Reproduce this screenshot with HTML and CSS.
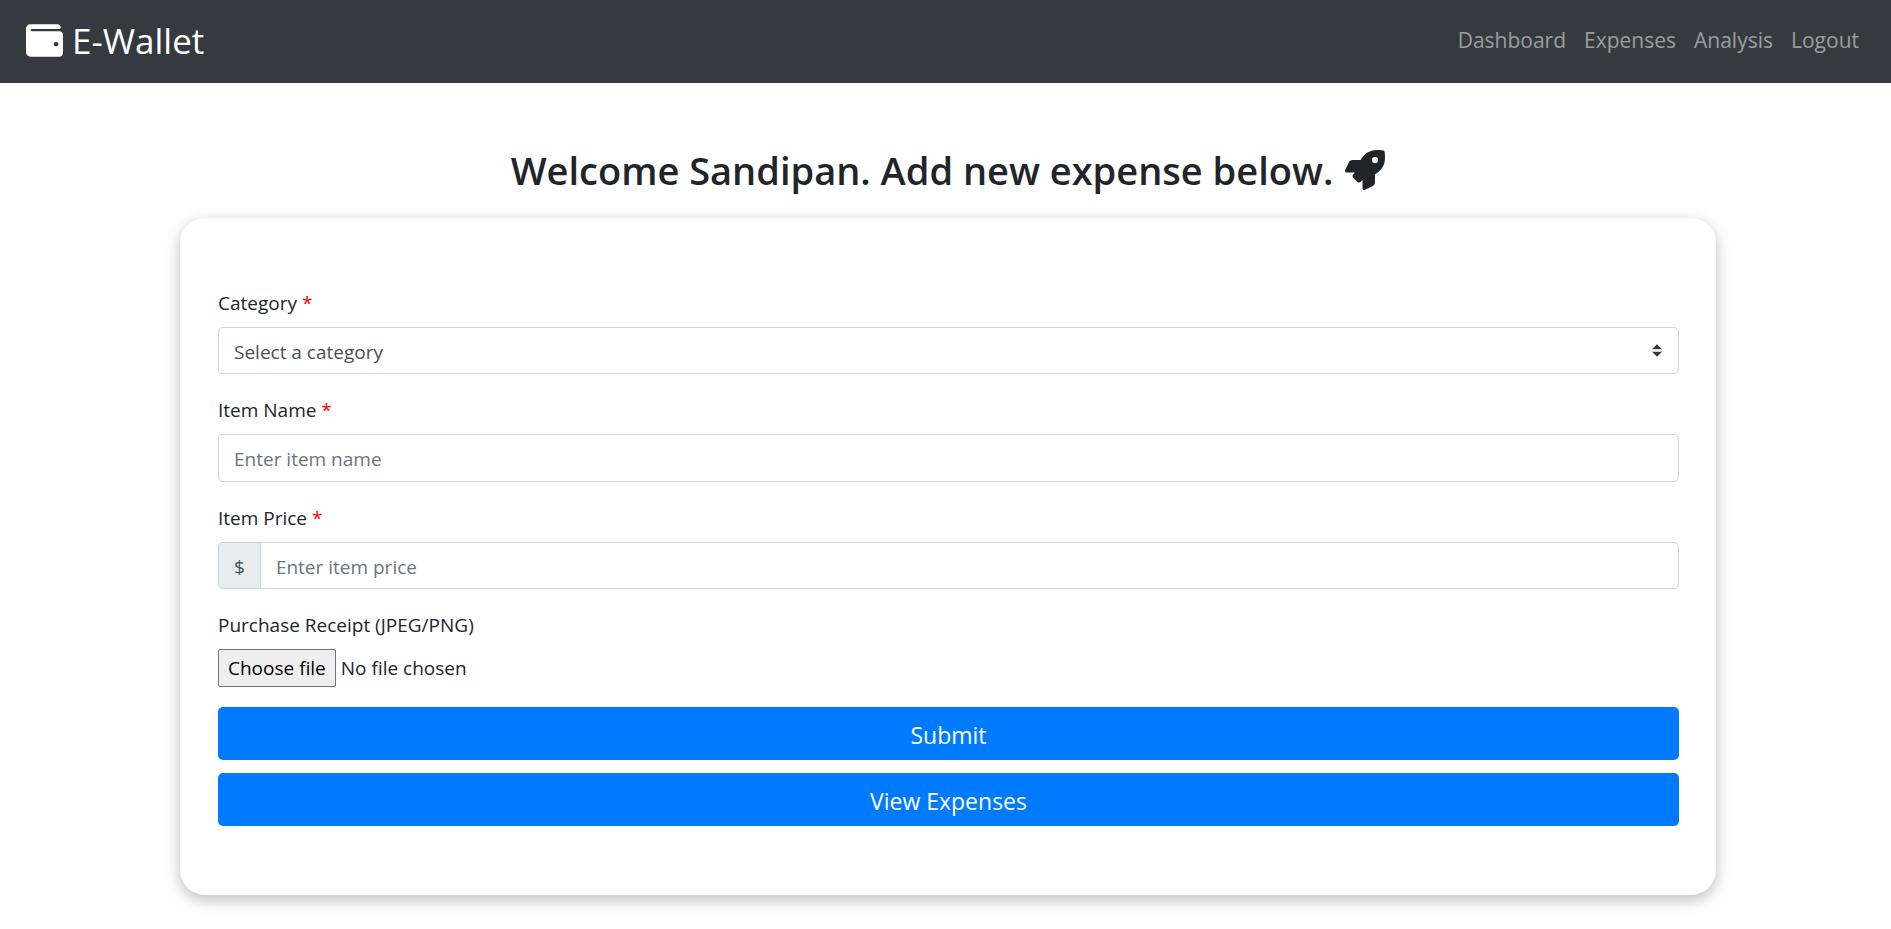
FILE: index.html
```html
<!DOCTYPE html>
<html lang="en">
<head>
<meta charset="utf-8">
<meta name="viewport" content="width=device-width, initial-scale=1">
<title>E-Wallet</title>
<link rel="stylesheet" href="styles.css">
</head>
<body>
<header class="navbar">
  <a class="brand" href="#">
    <svg class="brand-icon" viewBox="0 0 512 512" aria-hidden="true"><path fill="currentColor" d="M461.2 128H80c-8.84 0-16-7.16-16-16s7.16-16 16-16h384c8.84 0 16-7.16 16-16 0-26.51-21.49-48-48-48H64C28.65 32 0 60.65 0 96v320c0 35.35 28.65 64 64 64h397.2c28.02 0 50.8-21.53 50.8-48V176c0-26.47-22.78-48-50.8-48zM416 336c-17.67 0-32-14.33-32-32s14.33-32 32-32 32 14.33 32 32-14.33 32-32 32z"/></svg>
    <span>E-Wallet</span>
  </a>
  <nav class="nav-links">
    <a href="#">Dashboard</a>
    <a href="#">Expenses</a>
    <a href="#">Analysis</a>
    <a href="#">Logout</a>
  </nav>
</header>
<main class="page">
  <h1 class="title">
    <span>Welcome Sandipan. Add new expense below.</span>
    <svg class="title-icon" viewBox="0 0 512 512" aria-hidden="true"><path fill="currentColor" d="M505.12 19.09c-1.19-5.53-6.66-11-12.21-12.18C460.72 0 435.51 0 410.41 0 307.18 0 245.27 55.2 199.05 128H94.84c-16.35.02-35.56 11.88-42.89 26.48L2.52 253.3A28.4 28.4 0 0 0 0 264a24 24 0 0 0 24 24h103.82l-22.48 22.47c-11.36 11.36-13 32.26 0 45.25l50.9 50.9c11.16 11.19 32.16 13.16 45.28 0L224 384.16V488a24 24 0 0 0 24 24 28.56 28.56 0 0 0 10.71-2.52l98.73-49.39c14.63-7.29 26.5-26.5 26.5-42.86V312.8c72.6-46.31 128.04-108.4 128.04-211.1.1-25.2.1-50.4-6.86-82.61zM384.04 168a40 40 0 1 1 40-40 40 40 0 0 1-40 40z"/></svg>
  </h1>
  <form class="card">
    <div class="field">
      <label for="category">Category <span class="required">*</span></label>
      <div class="select-wrap">
        <select class="control" id="category">
          <option>Select a category</option>
        </select>
        <svg class="select-arrows" viewBox="0 0 4 5" aria-hidden="true"><path fill="#343a40" d="M2 0L0 2h4zm0 5L0 3h4z"/></svg>
      </div>
    </div>
    <div class="field">
      <label for="item-name">Item Name <span class="required">*</span></label>
      <input class="control control-text" id="item-name" type="text" placeholder="Enter item name">
    </div>
    <div class="field">
      <label for="item-price">Item Price <span class="required">*</span></label>
      <div class="input-group">
        <span class="prefix">$</span>
        <input class="control" id="item-price" type="text" placeholder="Enter item price">
      </div>
    </div>
    <div class="field">
      <label for="receipt">Purchase Receipt (JPEG/PNG)</label>
      <div class="file">
        <span class="file-button">Choose file</span>
        <span>No file chosen</span>
        <input class="file-input" id="receipt" type="file" accept="image/jpeg,image/png">
      </div>
    </div>
    <div class="actions">
      <button class="button" type="submit">Submit</button>
      <button class="button" type="button">View Expenses</button>
    </div>
  </form>
</main>
</body>
</html>
```

FILE: styles.css
```css
* {
  box-sizing: border-box;
}

body {
  margin: 0;
  background: #fff;
  color: #212529;
  font-family: "Segoe UI", "Open Sans", "Noto Sans", sans-serif;
  font-size: 19px;
  line-height: 30px;
}

input,
select,
button {
  margin: 0;
  font: inherit;
}

.navbar {
  display: flex;
  align-items: center;
  justify-content: space-between;
  padding: 13px 32px 15px 26px;
  background: #343a40;
}

.brand {
  display: flex;
  align-items: center;
  gap: 9px;
  color: #fff;
  font-size: 35px;
  line-height: 55px;
  text-decoration: none;
}

.brand-icon {
  width: 37px;
  height: 37px;
}

.nav-links {
  display: flex;
  gap: 18px;
  padding-bottom: 2px;
  font-size: 21px;
}

.nav-links a {
  color: rgba(255, 255, 255, 0.5);
  text-decoration: none;
}

.page {
  padding: 63px 175px 34px 180px;
}

.title {
  display: flex;
  align-items: center;
  justify-content: center;
  gap: 12px;
  margin: 0 0 24px;
  font-size: 38px;
  font-weight: 600;
  line-height: 48px;
}

.title-icon {
  width: 40px;
  height: 40px;
}

.card {
  padding: 69px 37px 69px 38px;
  border-radius: 25px;
  background: #fff;
  box-shadow: 0 5px 15px rgba(0, 0, 0, 0.26);
}

.field {
  display: flex;
  flex-direction: column;
  gap: 8px;
  margin-bottom: 20px;
}

.field label {
  line-height: 32px;
}

.required {
  color: #f00;
}

.control {
  display: block;
  width: 100%;
  height: 47px;
  padding: 2px 15px 0;
  border: 1px solid #ced4da;
  border-radius: 5px;
  background: #fff;
  color: #495057;
  appearance: none;
}

.control-text {
  height: 48px;
}

.control::placeholder {
  color: #6c757d;
  opacity: 1;
}

.select-wrap {
  position: relative;
}

.select-arrows {
  position: absolute;
  top: 17px;
  right: 17px;
  width: 10px;
  height: 13px;
  pointer-events: none;
}

.input-group {
  display: flex;
}

.prefix {
  padding: 9px 15px 6px;
  border: 1px solid #ced4da;
  border-right: 0;
  border-radius: 5px 0 0 5px;
  background: #e9ecef;
  color: #495057;
}

.input-group .control {
  flex: 1;
  border-radius: 0 5px 5px 0;
}

.file {
  display: flex;
  align-items: center;
  gap: 5px;
  position: relative;
}

.file-button {
  padding: 3px 9px;
  border: 1px solid #767676;
  border-radius: 2px;
  background: #efefef;
  color: #000;
}

.file-input {
  position: absolute;
  inset: 0;
  width: 100%;
  opacity: 0;
}

.actions {
  display: flex;
  flex-direction: column;
  gap: 13px;
}

.button {
  padding: 11px 20px 8px;
  border: 0;
  border-radius: 5px;
  background: #007bff;
  color: #fff;
  font-size: 23px;
  line-height: 34px;
}
```
